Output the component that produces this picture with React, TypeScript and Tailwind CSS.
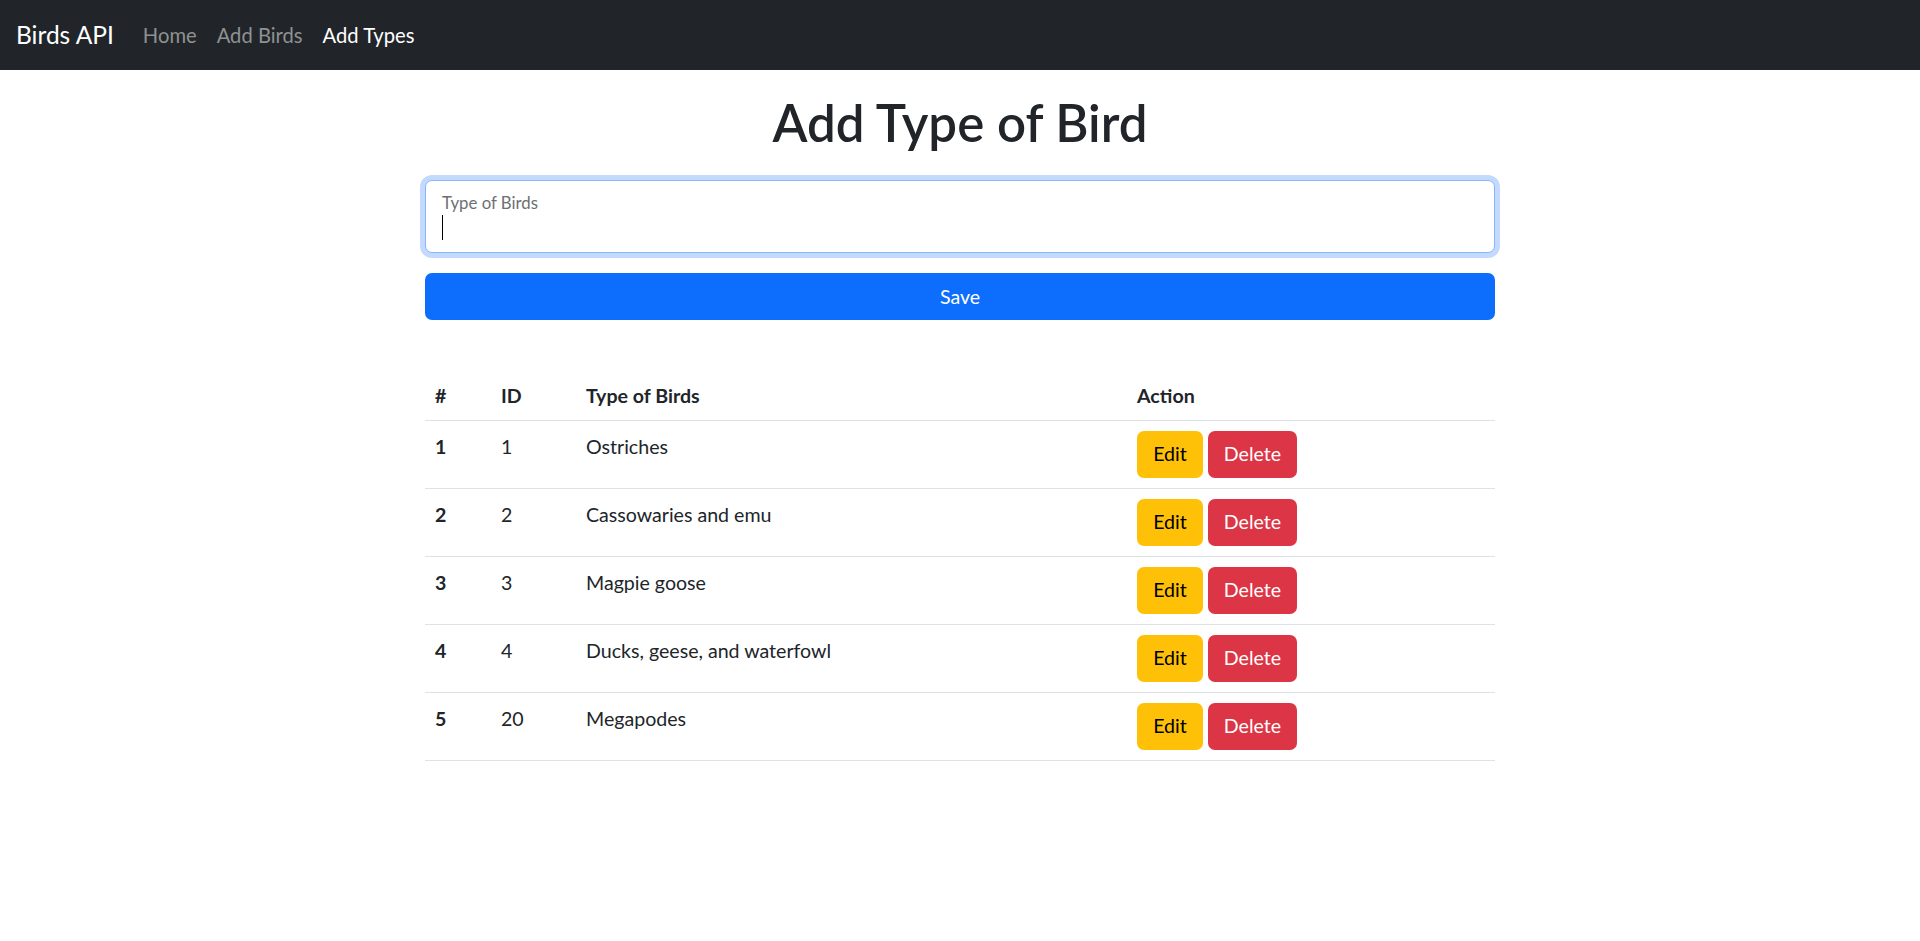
import React from "react";

const rows = [
  { n: 1, id: 1, type: "Ostriches" },
  { n: 2, id: 2, type: "Cassowaries and emu" },
  { n: 3, id: 3, type: "Magpie goose" },
  { n: 4, id: 4, type: "Ducks, geese, and waterfowl" },
  { n: 5, id: 20, type: "Megapodes" },
];

export default function App() {
  return (
    <div
      className="min-h-[941px] bg-white text-[#212529]"
      style={{ fontFamily: "Lato, 'Noto Sans', sans-serif" }}
    >
      <nav className="h-[70px] bg-[#212529] flex items-center px-[16px]">
        <span className="text-[24.5px] text-white mr-[19px] leading-none">Birds API</span>
        <div className="flex items-center text-[20.2px] leading-none">
          <span className="px-[10px] text-[#8f9193]">Home</span>
          <span className="px-[10px] text-[#8f9193]">Add Birds</span>
          <span className="px-[10px] text-white">Add Types</span>
        </div>
      </nav>

      <main className="w-[1070px] mx-auto pt-[23px]">
        <h1 className="text-center text-[51px] font-semibold leading-[60px] mb-[27px]">
          Add Type of Bird
        </h1>

        <div className="h-[73px] rounded-[7px] border border-[#86b7fe] ring-[5px] ring-[#c3dafe] bg-white px-[16px] pt-[12px]">
          <div className="text-[16.8px] text-[#6c7073] leading-[20px]">Type of Birds</div>
          <div className="w-[1px] h-[25px] bg-black mt-[2px]" />
        </div>

        <button className="mt-[20px] w-full h-[47px] rounded-[7px] bg-[#0d6efd] text-white text-[19.6px]">
          Save
        </button>

        <table className="w-full mt-[51px] border-collapse text-[19.6px]">
          <thead>
            <tr className="border-b border-[#dee2e6] h-[49px]">
              <th className="w-[66px] text-left font-bold px-[10px]">#</th>
              <th className="w-[85px] text-left font-bold px-[10px]">ID</th>
              <th className="w-[551px] text-left font-bold px-[10px]">Type of Birds</th>
              <th className="text-left font-bold px-[10px]">Action</th>
            </tr>
          </thead>
          <tbody>
            {rows.map((r) => (
              <tr key={r.n} className="border-b border-[#dee2e6]">
                <th className="text-left align-top font-bold px-[10px] pt-[11px] leading-[29px]">{r.n}</th>
                <td className="align-top px-[10px] pt-[11px] leading-[29px]">{r.id}</td>
                <td className="align-top px-[10px] pt-[11px] leading-[29px]">{r.type}</td>
                <td className="align-top px-[10px] py-[10px]">
                  <div className="flex gap-[5px]">
                    <button className="h-[47px] w-[66px] rounded-[7px] bg-[#ffc107] text-black text-[19.6px]">
                      Edit
                    </button>
                    <button className="h-[47px] w-[89px] rounded-[7px] bg-[#dc3545] text-white text-[19.6px]">
                      Delete
                    </button>
                  </div>
                </td>
              </tr>
            ))}
          </tbody>
        </table>
      </main>
    </div>
  );
}
